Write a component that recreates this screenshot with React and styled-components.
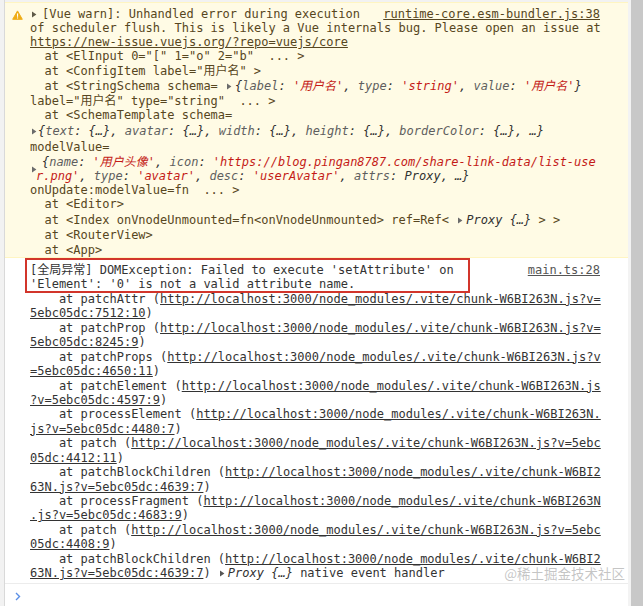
import styled, { createGlobalStyle } from "styled-components";

const GlobalStyle = createGlobalStyle`
  html, body {
    margin: 0;
    padding: 0;
    background: #fff;
    overflow: hidden;
  }
  body {
    font-family: "DejaVu Sans Mono", "Noto Sans CJK SC", monospace;
    font-size: 12px;
  }
`;

const URL = "http://localhost:3000/node_modules/.vite/chunk-W6BI263N.js?v=5ebc05dc:";
const COLS = 79;

const stack = [
  ["patchAttr", "7512:10"],
  ["patchProp", "8245:9"],
  ["patchProps", "4650:11"],
  ["patchElement", "4597:9"],
  ["processElement", "4480:7"],
  ["patch", "4412:11"],
  ["patchBlockChildren", "4639:7"],
  ["processFragment", "4683:9"],
  ["patch", "4408:9"],
  ["patchBlockChildren", "4639:7"],
];

function Caret({ w = 10, color = "#6b6b6b" }) {
  return (
    <CaretSvg width={w} height="14" viewBox={`0 0 ${w} 14`}>
      <path d="M2 4.6 L6.4 7.5 L2 10.4 Z" fill={color} />
    </CaretSvg>
  );
}

function WarnIcon() {
  return (
    <svg width="11" height="10" viewBox="0 0 11 10">
      <path
        d="M5.5 0.9 L10.3 9.3 H0.7 Z"
        fill="#efad17"
        stroke="#efad17"
        strokeWidth="1"
        strokeLinejoin="round"
      />
      <rect x="5" y="3.4" width="1.1" height="3.4" fill="#fff" />
      <rect x="5" y="7.4" width="1.1" height="1.1" fill="#fff" />
    </svg>
  );
}

function StackFrame({ fn, loc, tail }) {
  const head = `    at ${fn} (`;
  const url = URL + loc;
  const cut = COLS - head.length;
  return (
    <>
      <ErrLine>
        {head}
        <Link>{url.slice(0, cut)}</Link>
      </ErrLine>
      <ErrLine>
        <Link>{url.slice(cut)}</Link>){tail}
      </ErrLine>
    </>
  );
}

function App() {
  return (
    <>
      <GlobalStyle />
      <Frame>
        <Gutter />
        <Console>
          <WarnMessage>
            <IconCell>
              <WarnIcon />
            </IconCell>
            <Body>
              <HeadLine $h={14}>
                <span>
                  <Caret w={12} color="#5f5a48" />
                  [Vue warn]: Unhandled error during execution
                </span>
                <Link>runtime-core.esm-bundler.js:38</Link>
              </HeadLine>
              <Line $h={14}>of scheduler flush. This is likely a Vue internals bug. Please open an issue at</Line>
              <Line $h={14}><Link>https://new-issue.vuejs.org/?repo=vuejs/core</Link></Line>
              <Line $h={15}>{'  at <ElInput 0="[" 1="o" 2="b"  ... >'}</Line>
              <Line $h={14}>{'  at <ConfigItem label="用户名" >'}</Line>
              <Line $h={16}>
                {"  at <StringSchema schema= "}
                <Caret />
                <Obj>
                  {"{"}<Key>label</Key>: <Str>'用户名'</Str>, <Key>type</Key>: <Str>'string'</Str>, <Key>value</Key>: <Str>'用户名'</Str>{"}"}
                </Obj>
              </Line>
              <Line $h={14}>{'label="用户名" type="string"  ... >'}</Line>
              <Line $h={15}>{"  at <SchemaTemplate schema="}</Line>
              <Line $h={16}>
                <Caret w={8} />
                <Obj>
                  {"{"}<Key>text</Key>: {"{…}"}, <Key>avatar</Key>: {"{…}"}, <Key>width</Key>: {"{…}"}, <Key>height</Key>: {"{…}"}, <Key>borderColor</Key>: {"{…}"}, {"…}"}
                </Obj>
              </Line>
              <Line $h={16}>modelValue=</Line>
              <ObjGroup>
                <Caret w={6} />
                <ObjLines>
                  <Line $h={14} $indent={6}>
                    <Obj>
                      {"{"}<Key>name</Key>: <Str>'用户头像'</Str>, <Key>icon</Key>: <Str>'https://blog.pingan8787.com/share-link-data/list-use</Str>
                    </Obj>
                  </Line>
                  <Line $h={14}>
                    <Obj>
                      <Str>r.png'</Str>, <Key>type</Key>: <Str>'avatar'</Str>, <Key>desc</Key>: <Str>'userAvatar'</Str>, <Key>attrs</Key>: Proxy, {"…}"}
                    </Obj>
                  </Line>
                </ObjLines>
              </ObjGroup>
              <Line $h={14}>{"onUpdate:modelValue=fn  ... >"}</Line>
              <Line $h={15}>{"  at <Editor>"}</Line>
              <Line $h={16}>
                {"  at <Index onVnodeUnmounted=fn<onVnodeUnmounted> ref=Ref< "}
                <Caret />
                <Obj>Proxy {"{…}"}</Obj>
                {" > >"}
              </Line>
              <Line $h={15}>{"  at <RouterView>"}</Line>
              <Line $h={14}>{"  at <App>"}</Line>
            </Body>
          </WarnMessage>

          <ErrMessage>
            <IconCell />
            <Body>
              <HeadLine $h={14.44}>
                <span>[全局异常] DOMException: Failed to execute 'setAttribute' on</span>
                <Link $muted>main.ts:28</Link>
              </HeadLine>
              <ErrLine>'Element': '0' is not a valid attribute name.</ErrLine>
              {stack.map(([fn, loc], i) => (
                <StackFrame
                  key={i}
                  fn={fn}
                  loc={loc}
                  tail={
                    i === stack.length - 1 ? (
                      <>
                        {" "}
                        <Caret color="#555" />
                        <Obj>Proxy {"{…}"}</Obj>
                        {" native event handler"}
                      </>
                    ) : null
                  }
                />
              ))}
            </Body>
            <Highlight />
          </ErrMessage>

          <PromptRow>
            <svg width="6" height="9" viewBox="0 0 6 9">
              <path d="M1 1 L4.5 4.5 L1 8" fill="none" stroke="#5b8fe6" strokeWidth="1.4" />
            </svg>
          </PromptRow>

          <Watermark>@稀土掘金技术社区</Watermark>
        </Console>
        <Scrollbar />
      </Frame>
    </>
  );
}

const Frame = styled.div`
  display: flex;
  width: 643px;
  height: 606px;
  overflow: hidden;
`;

const Gutter = styled.div`
  width: 4px;
  flex: none;
  background: #f2f2f2;
  border-right: 1px solid #d9d9d9;
`;

const Console = styled.div`
  flex: 1;
  position: relative;
  display: flex;
  flex-direction: column;
  border-top: 2px solid #f2f2f2;
  min-width: 0;
`;

const Scrollbar = styled.div`
  width: 12px;
  flex: none;
  background: #c8c8c8;
  border-left: 3px solid #f3f3f3;
`;

const WarnMessage = styled.div`
  display: flex;
  background: #fffbe5;
  border-top: 1px solid #fff5c2;
  border-bottom: 1px solid #fff5c2;
  color: #574621;
  padding-top: 4px;
`;

const ErrMessage = styled.div`
  position: relative;
  display: flex;
  color: #333;
  padding: 5px 0 2px;
  border-bottom: 1px solid #ececec;
`;

const IconCell = styled.div`
  width: 25px;
  flex: none;
  padding: 2px 0 0 7px;
  box-sizing: border-box;
`;

const Body = styled.div`
  flex: 1;
  padding-right: 28px;
  min-width: 0;
`;

const Line = styled.div`
  display: flex;
  align-items: center;
  height: ${(p) => p.$h}px;
  line-height: ${(p) => p.$h}px;
  white-space: pre;
  padding-left: ${(p) => p.$indent || 0}px;
`;

const HeadLine = styled(Line)`
  justify-content: space-between;

  & > span {
    display: flex;
    align-items: center;
    white-space: pre;
  }
`;

const ErrLine = styled(Line).attrs({ $h: 14.44 })``;

const ObjGroup = styled.div`
  display: flex;
  align-items: center;
`;

const ObjLines = styled.div`
  display: flex;
  flex-direction: column;
`;

const Obj = styled.span`
  font-style: italic;
  color: #303030;
`;

const Key = styled.span`
  color: #5e5e5e;
`;

const Str = styled.span`
  color: #c41a16;
`;

const Link = styled.span`
  text-decoration: underline;
  text-underline-offset: 1px;
  color: ${(p) => (p.$muted ? "#555" : "inherit")};
  white-space: pre;
`;

const CaretSvg = styled.svg`
  flex: none;
  overflow: visible;
`;

const Highlight = styled.div`
  position: absolute;
  left: 20px;
  top: 0;
  width: 445px;
  height: 35px;
  border: 2px solid #d2352b;
  box-sizing: border-box;
  pointer-events: none;
`;

const PromptRow = styled.div`
  flex: 1;
  padding: 6px 0 0 10px;
`;

const Watermark = styled.div`
  position: absolute;
  right: 3px;
  bottom: 26px;
  font-family: "Noto Sans CJK SC", sans-serif;
  font-size: 13.5px;
  line-height: 14px;
  color: rgba(140, 140, 140, 0.5);
  pointer-events: none;
`;

export default App;
